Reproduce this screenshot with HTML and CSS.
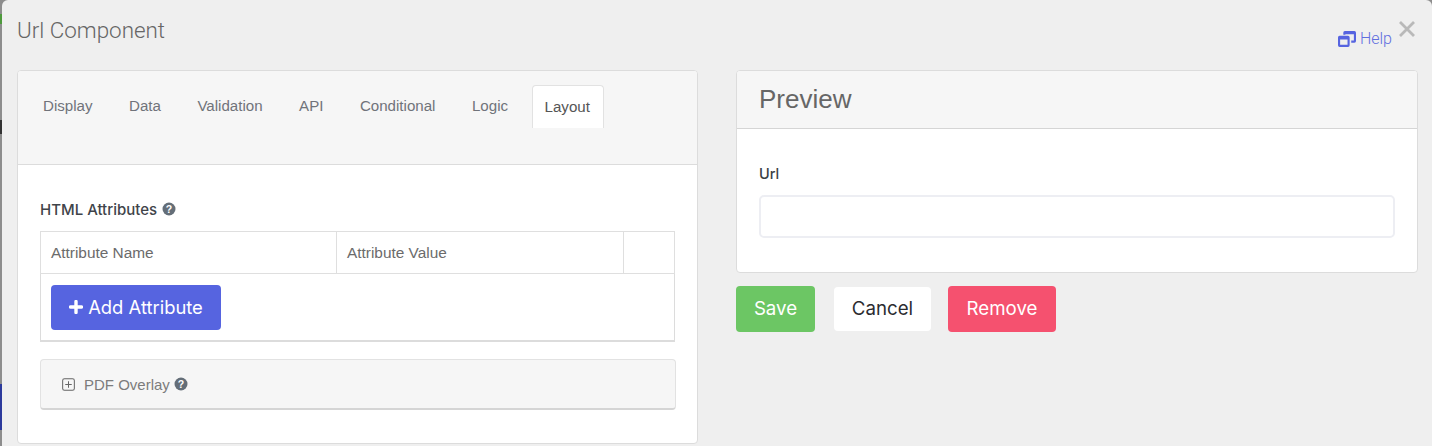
FILE: index.html
```html
<!DOCTYPE html>
<html lang="en">
<head>
<meta charset="utf-8">
<title>Url Component</title>
<link rel="stylesheet" href="styles.css">
</head>
<body>
<div class="backdrop">
  <span class="bit bit-green"></span>
  <span class="bit bit-dark"></span>
  <span class="bit bit-blue"></span>
</div>
<div class="modal">
  <header class="modal-head">
    <h1 class="title">Url Component</h1>
    <div class="head-right">
      <a class="help">
        <svg class="help-icon" viewBox="0 0 17 15" width="18" height="16"><path fill="#5664e0" d="M6.500 0H15.500A1.500 1.500 0 0 1 17 1.500V9.500A1.500 1.500 0 0 1 15.500 11H12.500V9H15V3H7V3.500H5V1.500A1.500 1.500 0 0 1 6.500 0Z"/><path fill="#5664e0" fill-rule="evenodd" d="M1.500 4.500H9.500A1.500 1.500 0 0 1 11 6V13.500A1.500 1.500 0 0 1 9.500 15H1.500A1.500 1.500 0 0 1 0 13.500V6A1.500 1.500 0 0 1 1.500 4.500ZM2 8V13H9V8Z"/></svg>
        <span>Help</span>
      </a>
      <svg class="close" viewBox="0 0 16 16" width="16" height="16"><path d="M1 1l14 14M15 1L1 15" stroke="#b9b9b9" stroke-width="2.800" fill="none"/></svg>
    </div>
  </header>
  <div class="columns">
    <section class="card">
      <nav class="tabs">
        <a class="tab">Display</a>
        <a class="tab">Data</a>
        <a class="tab">Validation</a>
        <a class="tab">API</a>
        <a class="tab">Conditional</a>
        <a class="tab">Logic</a>
        <a class="tab tab-active">Layout</a>
      </nav>
      <div class="card-body">
        <div class="field-label">HTML Attributes
          <svg class="q" viewBox="0 0 14 14" width="14" height="14"><circle cx="7" cy="7" r="6.500" fill="#646e78"/><text x="7" y="10.500" text-anchor="middle" class="q-mark">?</text></svg>
        </div>
        <table class="attrs">
          <tr><th class="c1">Attribute Name</th><th class="c2">Attribute Value</th><th class="c3"></th></tr>
          <tr><td colspan="3" class="add-cell"><button class="btn btn-add"><svg viewBox="0 0 14 14" width="14" height="14"><path d="M7 1.500v11M1.500 7h11" stroke="#fff" stroke-width="3.400" stroke-linecap="round"/></svg><span>Add Attribute</span></button></td></tr>
        </table>
        <div class="overlay">
          <svg viewBox="0 0 14 14" width="13" height="13"><rect x="0.700" y="0.700" width="12.600" height="12.600" rx="2" fill="none" stroke="#666" stroke-width="1.100"/><path d="M7 3.500v7M3.500 7h7" stroke="#666" stroke-width="1.100"/></svg>
          <span class="overlay-text">PDF Overlay</span>
          <svg class="q" viewBox="0 0 14 14" width="14" height="14"><circle cx="7" cy="7" r="6.500" fill="#646e78"/><text x="7" y="10.500" text-anchor="middle" class="q-mark">?</text></svg>
        </div>
      </div>
    </section>
    <div class="right">
      <section class="card card-preview">
        <h2 class="preview-head">Preview</h2>
        <div class="preview-body">
          <label class="url-label">Url</label>
          <div class="input"></div>
        </div>
      </section>
      <div class="actions">
        <button class="btn btn-save">Save</button>
        <button class="btn btn-cancel">Cancel</button>
        <button class="btn btn-remove">Remove</button>
      </div>
    </div>
  </div>
</div>
</body>
</html>
```
FILE: styles.css
```css
* { box-sizing: border-box; }
html, body { margin: 0; height: 446px; overflow: hidden; }
body {
  display: flex;
  background: #8d8d8d;
  font-family: "Liberation Sans", Arial, sans-serif;
}
.backdrop { width: 2px; flex: none; display: flex; flex-direction: column; }
.bit { display: block; width: 2px; }
.bit-green { height: 10px; margin-top: 14px; background: #4e9a3c; }
.bit-dark { height: 14px; margin-top: 96px; background: #333; }
.bit-blue { height: 46px; margin-top: 250px; background: #2c3a9c; }
.modal {
  flex: 1;
  background: #efefef;
  border-radius: 6px 6px 0 0;
  padding: 0 14px 0 15px;
}
.modal-head {
  height: 70px;
  display: flex;
  justify-content: space-between;
}
.title {
  margin: 16px 0 0;
  font-family: Roboto, "Liberation Sans", sans-serif;
  font-size: 22.400px;
  line-height: 28px;
  font-weight: 300;
  color: #666;
}
.head-right { display: flex; align-items: flex-start; margin-right: 3px; }
.help {
  display: flex;
  align-items: center;
  gap: 4px;
  margin-top: 30px;
  font-family: Roboto, "Liberation Sans", sans-serif;
  font-weight: 300;
  color: #5f6edf;
  font-size: 16px;
  line-height: 18px;
}
.close { margin: 21px 0 0 7px; }
.columns { display: grid; grid-template-columns: 681px 682px; column-gap: 38px; align-items: start; }
.card {
  background: #fff;
  border: 1px solid #dcdcdc;
  border-radius: 4px;
  overflow: hidden;
}
.tabs {
  height: 94px;
  padding: 14px 12px 0;
  display: flex;
  align-items: flex-start;
  gap: 10.500px;
  background: #f6f6f6;
  border-bottom: 1px solid #dcdcdc;
}
.tab {
  height: 43px;
  padding: 0 13px;
  font-size: 15.100px;
  line-height: 41px;
  color: #70737a;
}
.tab-active {
  background: #fff;
  border: 1px solid #e2e2e2;
  border-bottom: 0;
  border-radius: 4px 4px 0 0;
  padding: 0 13px 0 12px;
  color: #555;
}
.card-body { padding: 34px 21px 33px 22px; }
.field-label {
  display: flex;
  align-items: center;
  gap: 5px;
  height: 20px;
  font-family: Inter, sans-serif;
  font-size: 15px;
  font-weight: 500;
  color: #3f444a;
}
.q { flex: none; }
.q-mark { font: 700 10.500px "Liberation Sans", sans-serif; fill: #fff; }
.attrs {
  width: 635px;
  margin-top: 12px;
  border-collapse: collapse;
  table-layout: fixed;
  border: 1px solid #dcdcdc;
  border-bottom-width: 2px;
}
.attrs th {
  height: 42px;
  padding: 0 10px;
  text-align: left;
  font-size: 15.400px;
  font-weight: 400;
  color: #6b6b6b;
  border: 1px solid #dfdfdf;
}
.c1 { width: 296px; }
.c2 { width: 287px; }
.add-cell { padding: 11px 10px 10px; height: 67px; }
.btn {
  border: 0;
  border-radius: 4px;
  padding: 0 0 2px;
  font-family: Inter, sans-serif;
  font-size: 18.700px;
  color: #fff;
}
.btn-add {
  width: 170px;
  height: 45px;
  display: flex;
  align-items: center;
  justify-content: center;
  gap: 5px;
  background: #5664e0;
  font-size: 18.400px;
}
.overlay {
  width: 636px;
  height: 51px;
  margin-top: 17px;
  padding-left: 21px;
  display: flex;
  align-items: center;
  background: #f6f6f6;
  border: 1px solid #e2e2e2;
  border-bottom: 2px solid #d5d5d5;
  border-radius: 4px;
}
.overlay-text { margin: 0 4px 0 9px; font-size: 15px; color: #7c7c7c; }
.card-preview { height: 203px; }
.preview-head {
  margin: 0;
  height: 58px;
  padding: 0 0 0 22px;
  background: #f6f6f6;
  border-bottom: 1px solid #d5d5d5;
  font-size: 26px;
  font-weight: 400;
  line-height: 57px;
  color: #666;
}
.preview-body { padding: 35px 22px 0 22px; }
.url-label {
  display: block;
  height: 20px;
  font-family: Inter, sans-serif;
  font-size: 14.500px;
  font-weight: 500;
  line-height: 20px;
  color: #3a3f45;
}
.input {
  height: 43px;
  margin-top: 11px;
  background: #fff;
  border: 2px solid #edeef3;
  border-radius: 5px;
}
.actions { display: flex; align-items: center; margin-top: 13px; }
.btn-save { width: 79px; height: 46px; background: #6cc664; }
.btn-cancel { width: 97px; height: 44px; margin: 0 17px 0 19px; background: #fff; color: #2b2b30; }
.btn-remove { width: 108px; height: 46px; background: #f5516f; }
```
